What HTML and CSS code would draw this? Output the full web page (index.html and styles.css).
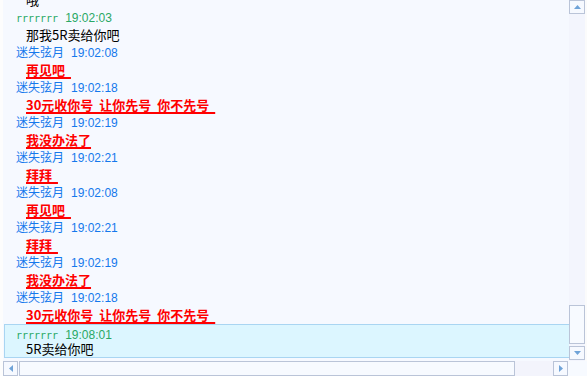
FILE: index.html
```html
<!DOCTYPE html>
<html lang="zh">
<head>
    <meta charset="UTF-8">
    <title>聊天记录</title>
    <link rel="stylesheet" href="styles.css">
</head>
<body>
    <div class="frame">
        <div class="top">
            <div class="edge"></div>

            <!-- 消息列表 -->
            <div class="chat">
                <div class="list">
                    <div class="text plain">哦</div>

                    <div class="head"><span class="who me">rrrrrrr</span><span class="at me-at">19:02:03</span></div>
                    <div class="text plain">那我5R卖给你吧</div>

                    <div class="head"><span class="who">迷失弦月</span><span class="at">19:02:08</span></div>
                    <div class="text"><span class="red">再见吧 </span></div>

                    <div class="head"><span class="who">迷失弦月</span><span class="at">19:02:18</span></div>
                    <div class="text"><span class="red">30元收你号 让你先号 你不先号 </span></div>

                    <div class="head"><span class="who">迷失弦月</span><span class="at">19:02:19</span></div>
                    <div class="text"><span class="red">我没办法了</span></div>

                    <div class="head"><span class="who">迷失弦月</span><span class="at">19:02:21</span></div>
                    <div class="text"><span class="red">拜拜 </span></div>

                    <div class="head"><span class="who">迷失弦月</span><span class="at">19:02:08</span></div>
                    <div class="text"><span class="red">再见吧 </span></div>

                    <div class="head"><span class="who">迷失弦月</span><span class="at">19:02:21</span></div>
                    <div class="text"><span class="red">拜拜 </span></div>

                    <div class="head"><span class="who">迷失弦月</span><span class="at">19:02:19</span></div>
                    <div class="text"><span class="red">我没办法了</span></div>

                    <div class="head"><span class="who">迷失弦月</span><span class="at">19:02:18</span></div>
                    <div class="text"><span class="red">30元收你号 让你先号 你不先号 </span></div>

                    <!-- 当前选中的消息 -->
                    <div class="selected">
                        <div class="head"><span class="who me">rrrrrrr</span><span class="at me-at">19:08:01</span></div>
                        <div class="text plain">5R卖给你吧</div>
                    </div>
                </div>
            </div>

            <!-- 竖直滚动条 -->
            <div class="vbar">
                <div class="btn btn-up">
                    <svg width="9" height="6" viewBox="0 0 9 6"><path d="M4.5 1 L8 5 L1 5 Z" fill="#6fa3d8"/></svg>
                </div>
                <div class="track"></div>
                <div class="thumb-v"></div>
                <div class="btn btn-down">
                    <svg width="9" height="6" viewBox="0 0 9 6"><path d="M1 1 L8 1 L4.5 5 Z" fill="#6fa3d8"/></svg>
                </div>
            </div>
            <div class="edge-r"></div>
        </div>

        <!-- 水平滚动条 -->
        <div class="hbar">
            <div class="edge"></div>
            <div class="btn">
                <svg width="6" height="9" viewBox="0 0 6 9"><path d="M5 1 L5 8 L1 4.5 Z" fill="#6fa3d8"/></svg>
            </div>
            <div class="thumb-h"></div>
            <div class="track"></div>
            <div class="btn">
                <svg width="6" height="9" viewBox="0 0 6 9"><path d="M1 1 L5 4.5 L1 8 Z" fill="#6fa3d8"/></svg>
            </div>
            <div class="corner"></div>
        </div>
    </div>
</body>
</html>
```

FILE: styles.css
```css
body {
    margin: 0;
    padding: 0;
    background-color: #f6f9ff;
    font-family: 'Noto Sans CJK SC', sans-serif;
    overflow: hidden;
}

.frame {
    width: 587px;
    height: 376px;
    display: flex;
    flex-direction: column;
}

.top {
    height: 361px;
    display: flex;
}

.edge {
    width: 3px;
    flex: none;
    background-color: #fdfdfd;
}

.edge-r {
    width: 2px;
    flex: none;
    background-color: #fbfbfb;
}

.chat {
    flex: 1;
    overflow: hidden;
}

.list {
    margin-top: -10px;
}

.head {
    height: 16px;
    line-height: 16px;
    padding-left: 13px;
    font-size: 12px;
    white-space: nowrap;
}

.who {
    color: #1478ec;
}

.at {
    color: #1478ec;
    font-family: 'Liberation Sans', sans-serif;
    margin-left: 7px;
}

.me {
    color: #2aa865;
    font-family: 'DejaVu Sans Mono', monospace;
    font-size: 10px;
}

.me-at {
    color: #2aa865;
}

.text {
    height: 19px;
    line-height: 19px;
    padding-left: 23px;
    font-size: 13px;
    white-space: pre;
}

.plain {
    color: #000;
}

.red {
    color: #ff0000;
    font-weight: bold;
    text-decoration: underline;
    text-decoration-thickness: 2px;
    text-underline-offset: 2px;
    word-spacing: 3px;
}

.selected {
    margin-left: 1px;
    background-color: #dcf6ff;
    border-top: 1px solid #a9d5f2;
    border-bottom: 1px solid #a9d5f2;
    border-left: 1px solid #a9d5f2;
}

.selected .head {
    padding-left: 11px;
    height: 15px;
    line-height: 15px;
    padding-top: 1px;
}

.selected .text {
    padding-left: 21px;
    height: 16px;
    line-height: 16px;
}

/* 滚动条 */
.vbar {
    width: 16px;
    flex: none;
    display: flex;
    flex-direction: column;
    background-color: #f3f5fd;
}

.btn {
    width: 15px;
    height: 14px;
    flex: none;
    box-sizing: border-box;
    border: 1px solid #bac4d8;
    background-color: #f6f9ff;
    display: flex;
    align-items: center;
    justify-content: center;
}

.vbar .btn {
    width: 16px;
}

.vbar .track {
    flex: 1;
}

.thumb-v {
    height: 39px;
    flex: none;
    box-sizing: border-box;
    border: 1px solid #bac4d8;
    background-color: #f7faff;
    margin-bottom: 2px;
}

.btn-down {
    margin-bottom: 1px;
}

.hbar {
    height: 15px;
    display: flex;
}

.hbar .btn {
    height: 15px;
}

.thumb-h {
    width: 496px;
    flex: none;
    box-sizing: border-box;
    margin-left: 1px;
    border: 1px solid #bac4d8;
    background-color: #f7faff;
}

.hbar .track {
    flex: 1;
    background-color: #f3f4fc;
}

.corner {
    width: 19px;
    flex: none;
    background-color: #f7faff;
}
```
